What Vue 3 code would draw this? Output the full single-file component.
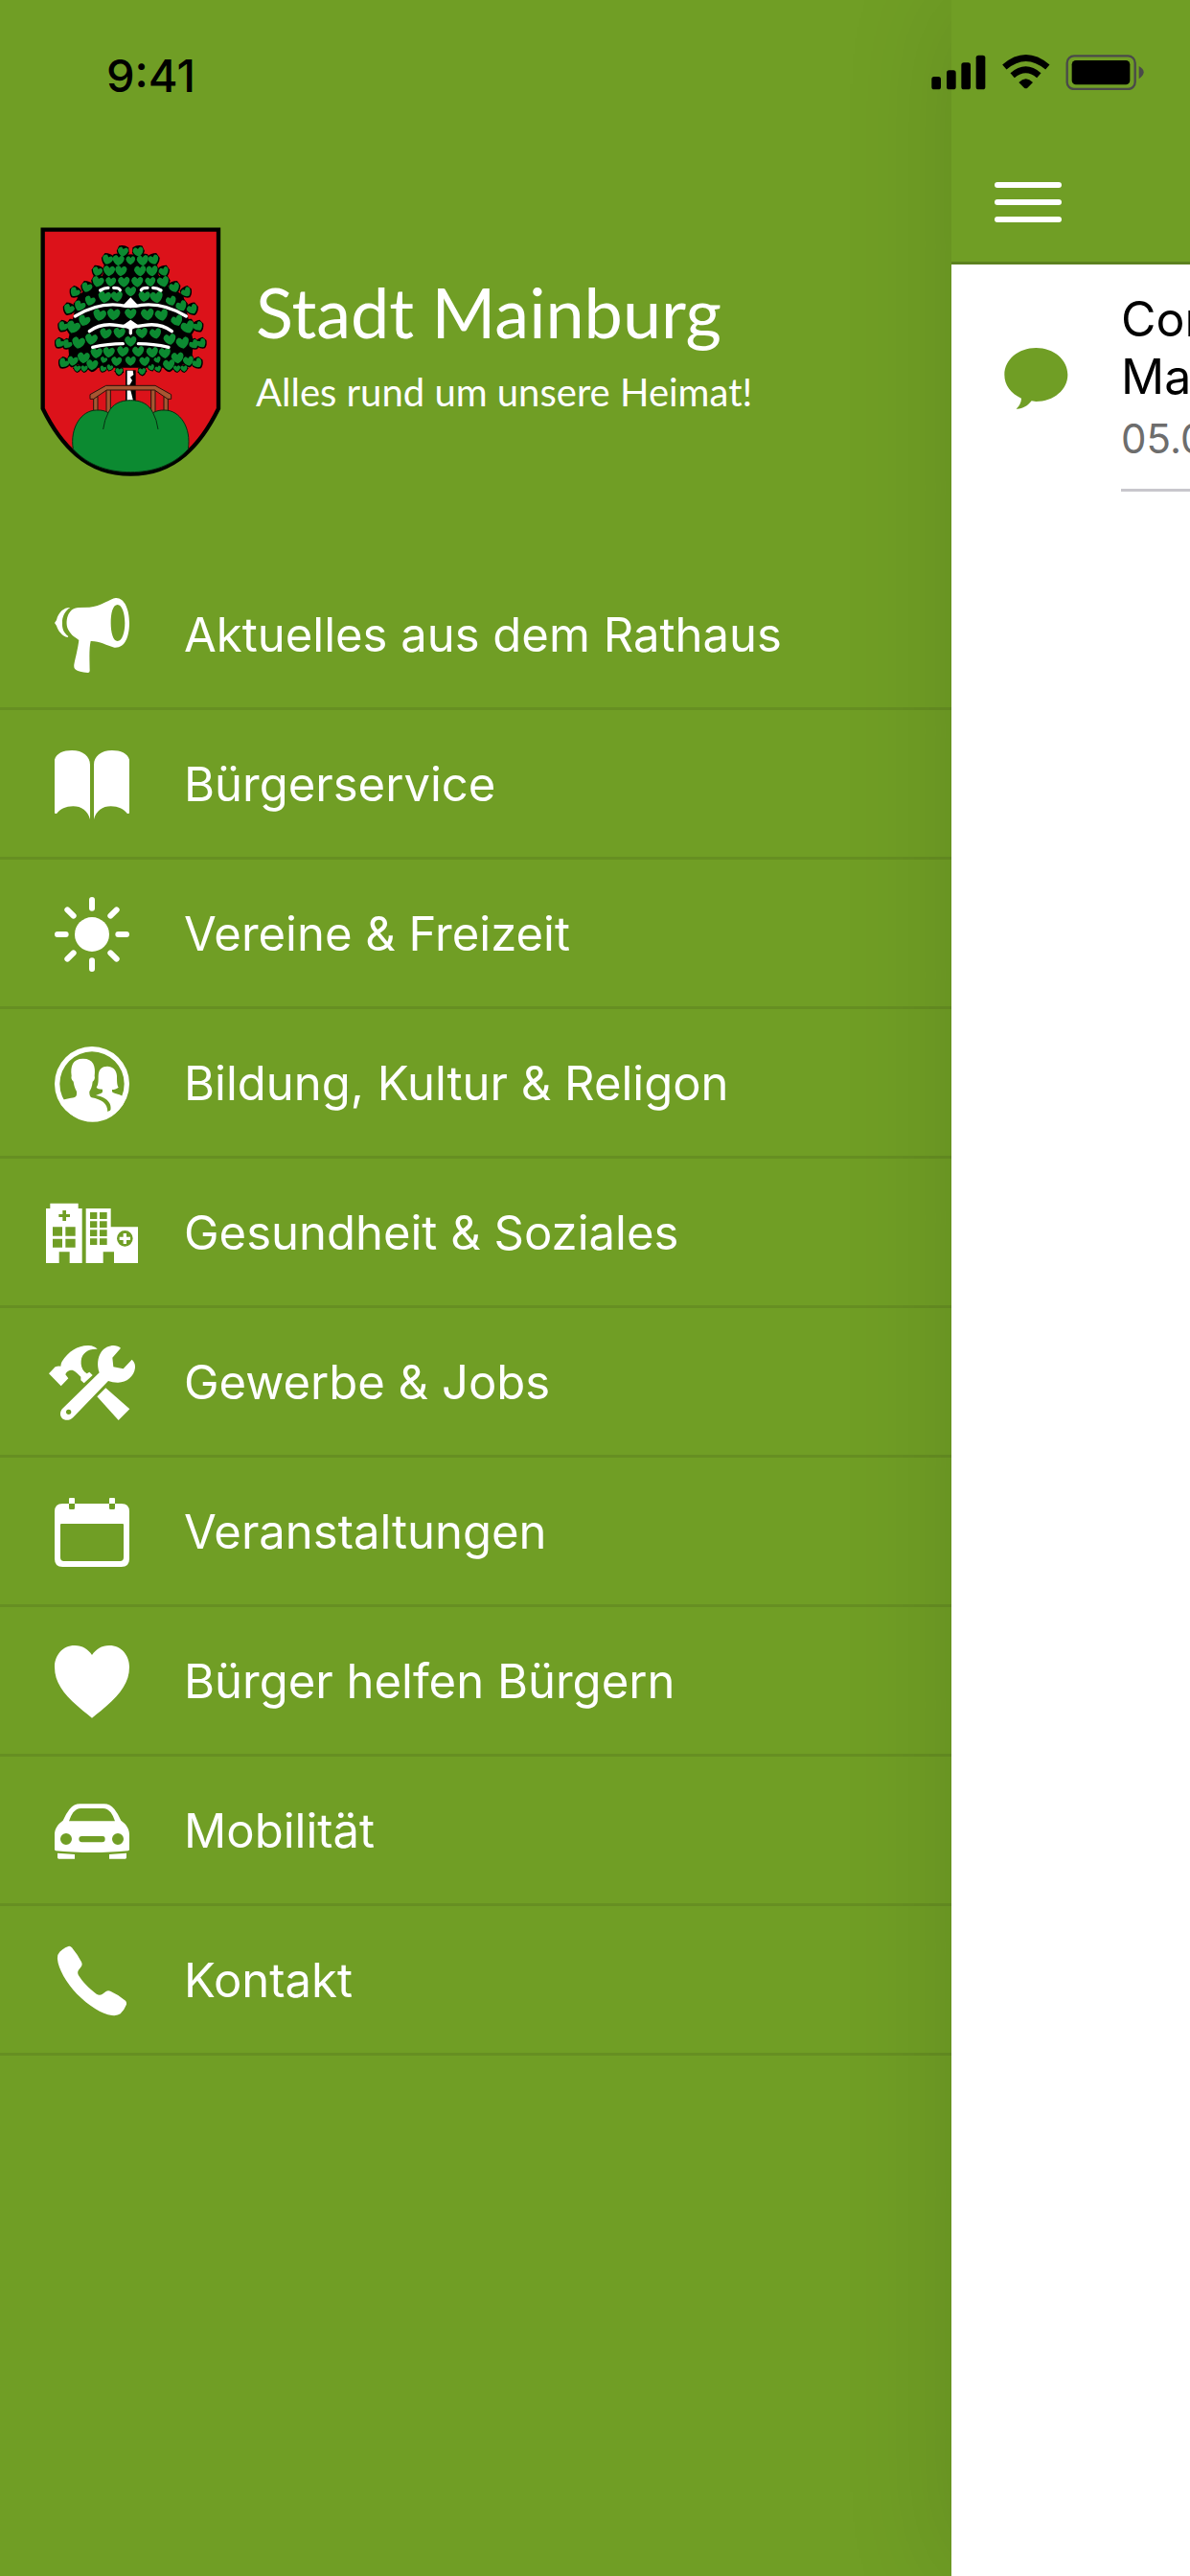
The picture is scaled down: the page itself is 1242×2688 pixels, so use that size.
<template>
  <div class="app">
    <div class="status-bar">
      <span class="clock">9:41</span>
      <svg class="status-icons" viewBox="97 80 666 111" aria-hidden="true">
        <rect x="98" y="149" width="29" height="40" rx="8" />
        <rect x="145" y="129" width="29" height="60" rx="8" />
        <rect x="191" y="105" width="29" height="84" rx="8" />
        <rect x="237" y="82" width="29" height="107" rx="8" />
        <g fill="none" stroke="#000" stroke-width="20">
          <path d="M326 119Q393 62 461 119" />
          <path d="M351 145Q393 109 434 145" />
        </g>
        <path d="M371 167Q393 145 415 167L398 184Q393 188 388 184Z" />
        <rect x="522" y="84" width="213" height="104" rx="22" fill="none" stroke="#4a4a4a" stroke-width="7" />
        <rect x="537" y="98" width="182" height="76" rx="13" />
        <path d="M747 116Q762 124 762 135T747 156Z" fill="#4a4a4a" />
      </svg>
    </div>

    <aside class="drawer">
      <header class="brand">
        <svg class="crest" viewBox="36 52 567 783" role="img" aria-label="Wappen Mainburg">
          <path d="M44 60H594V620C540 730 460 825 319 825S98 730 44 620Z" fill="#dc121a" stroke="#000" stroke-width="13" />
          <!-- tree -->
          <path d="M300 120L338 120L400 160L430 220L500 260L515 330L535 420L530 480L480 510H158L108 480L103 420L123 330L138 260L208 220L238 160Z" transform="translate(28.7 28) scale(.91 .91)" />
          <path d="M303 500H335V600H303Z" />
          <g v-for="(l, i) in leaves" :key="'b' + i" :transform="leafPos(l)">
            <path d="M-17 -17Q0 -24 17 -17L22 2Q14 20 0 24Q-14 20 -22 2Z" />
          </g>
          <g v-for="(l, i) in leaves" :key="'g' + i" :transform="leafPos(l)" fill="#0c8a31">
            <path d="M-9 -15Q-3 -14 0 -8Q4 -14 10 -15Q19 -12 18 -3Q15 11 0 18Q-15 12 -19 -3Q-18 -12 -9 -15Z" />
          </g>
          <g fill="none" stroke="#fff" stroke-width="10" stroke-linecap="round">
            <path d="M224 250Q236 242 249 242M266 242Q283 242 286 249" />
            <path d="M414 250Q402 242 389 242M372 242Q355 242 352 249" />
            <path d="M145 331Q215 288 285 296Q319 304 353 296Q423 288 493 331" />
            <path d="M190 378Q225 351 275 359Q319 368 363 359Q413 351 448 378" />
            <path d="M200 428Q248 417 295 417M438 428Q390 417 343 417" />
          </g>
          <path d="M319 272L344 298L319 305L294 298ZM319 342L345 360L324 372V386L319 390L314 386V372L293 360Z" fill="#fff" />
          <path d="M308 501H326L328 514L318 522L324 532L316 546H308ZM308 560H318L322 575L327 596H308Z" fill="#fff" />
          <!-- bridge -->
          <g fill="#a75632" stroke="#2b130a" stroke-width="3">
            <path d="M203 582H216V628H203ZM243 560H256V650H243ZM383 560H396V650H383ZM423 582H436V628H423Z" />
            <path d="M192 576L242 548H396L446 576V590H435L394 562H244L203 590H192Z" />
          </g>
          <path class="hill" d="M139 747C128 680 165 625 212 625C230 624 240 628 249 633C262 606 286 594 319 594S376 606 389 633C398 628 410 624 426 625C473 625 510 680 499 747C450 800 385 819 319 819S188 800 139 747Z" />
          <path d="M249 633Q237 655 233 685M389 633Q401 655 405 685" fill="none" stroke="#072f12" stroke-width="3" />
        </svg>
        <div class="brand-text">
          <h1>Stadt Mainburg</h1>
          <p>Alles rund um unsere Heimat!</p>
        </div>
      </header>

      <nav class="menu">
        <a v-for="item in items" :key="item.label" class="menu-item" href="#">
          <svg :viewBox="item.box" aria-hidden="true">
            <path v-for="(d, i) in item.paths" :key="i" :d="d" fill-rule="evenodd" />
            <path v-if="item.lines" class="lines" :d="item.lines" />
          </svg>
          <span>{{ item.label }}</span>
        </a>
      </nav>
    </aside>

    <main class="page">
      <div class="toolbar">
        <button class="burger" type="button" aria-label="Menü">
          <span></span><span></span><span></span>
        </button>
      </div>
      <article class="news">
        <svg class="bubble" viewBox="325 993 201 192" aria-hidden="true">
          <path d="M425 993C480 993 524 1030 524 1077S480 1161 425 1161L411 1159C398 1175 382 1185 363 1184Q378 1170 379 1151C346 1136 326 1110 326 1077C326 1030 370 993 425 993Z" />
        </svg>
        <div class="news-text">
          <h2>Cor<br>Ma</h2>
          <time>05.0</time>
        </div>
      </article>
    </main>
  </div>
</template>

<script setup>
// left half of the tree crown: x, y, rotation, scale
const half = [
  [295, 128, 10, 0.9], [247, 153, 20, 0.9], [281, 155, 5, 1],
  [215, 190, 20, 0.85], [252, 188, 5, 1], [289, 188, 5, 1],
  [217, 222, 15, 1], [257, 222, 5, 0.9], [298, 222, 0, 1],
  [145, 255, 35, 0.85], [182, 240, 20, 0.9], [238, 270, 8, 1.1], [276, 268, -5, 1],
  [192, 282, 20, 0.9], [160, 298, 25, 0.95], [126, 308, 25, 0.9],
  [222, 326, 12, 1.1], [266, 324, 5, 1.1],
  [174, 344, 20, 1], [140, 364, 20, 1.15], [108, 362, 30, 0.85],
  [241, 384, 10, 1], [284, 382, 5, 1],
  [196, 402, 10, 1.05], [156, 413, 10, 1.1], [121, 418, 35, 0.8], [97, 415, 35, 0.8],
  [212, 445, 5, 1], [251, 443, 5, 1], [295, 440, 5, 1],
  [172, 460, 5, 1.05], [138, 470, 10, 0.9], [110, 477, 35, 0.85],
  [235, 467, 20, 0.6], [275, 471, 5, 0.9],
  [199, 482, 5, 1], [174, 494, 5, 0.6], [152, 494, 5, 0.6],
  [254, 491, 20, 0.55], [233, 495, 20, 0.55], [283, 503, 5, 0.65],
]
const middle = [
  [319, 155, 0, 0.8], [319, 252, 0, 0.95], [319, 322, 0, 1],
  [319, 408, 0, 1], [319, 470, 0, 0.9],
]
const leaves = [...half, ...half.map(([x, y, r, s]) => [638 - x, y, -r, s]), ...middle]

function leafPos([x, y, r, s]) {
  return `translate(${x} ${y}) rotate(${r}) scale(${s})`
}

const items = [
  {
    label: 'Aktuelles aus dem Rathaus',
    box: '54 45 288 288',
    paths: [
      'M157 102C120 102 112 150 124 172C133 190 148 197 157 204C153 235 147 255 142 280C140 296 146 302 185 306Q191 306 191 300C191 270 188 235 194 207C220 206 245 221 268 227C300 230 315 195 315 150C315 105 298 70 272 72C255 74 225 99 190 101ZM278 93C263 93 257 120 257 150S264 207 278 207S301 180 301 150S292 93 278 93Z',
      'M130 102C112 101 93 115 87 141L81 150L87 159C92 175 105 192 122 195L124 192C108 180 104 165 105 150C104 130 114 112 130 102Z',
    ],
  },
  {
    label: 'Bürgerservice',
    box: '54 513 288 288',
    paths: [
      'M81 578C87 558 108 549 135 549C170 549 192 568 192 594V765C185 738 165 724 139 724C115 724 100 733 88 746Q81 748 81 744Z',
      'M315 578C309 558 288 549 261 549C226 549 204 568 204 594V765C211 738 231 724 257 724C281 724 296 733 308 746Q315 748 315 744Z',
    ],
  },
  {
    label: 'Vereine & Freizeit',
    box: '54 81 288 288',
    paths: ['M144 225A54 54 0 0 1 252 225A54 54 0 0 1 144 225Z'],
    lines: 'M198 117V143M198 307V333M90 225H116M280 225H306M121 148L140 167M275 148L256 167M121 302L140 283M275 302L256 283',
  },
  {
    label: 'Bildung, Kultur & Religon',
    box: '54 549 288 288',
    paths: [
      'M81 693A117 117 0 0 1 315 693A117 117 0 0 1 81 693ZM97 693A101 101 0 0 0 299 693A101 101 0 0 0 97 693Z',
      'M100 748C112 738 140 739 147 733Q151 730 150 717C143 705 141 692 140 686C134 680 132 674 134 668C130 638 137 614 170 614S210 638 206 668C208 674 206 682 200 686C199 700 194 711 190 717Q189 732 197 736C228 742 247 754 247 780L256 777C259 762 254 751 243 742C232 733 220 731 210 729C220 724 231 724 231 717V710C221 710 214 707 212 704C218 695 218 685 218 668C219 646 230 638 246 638S275 648 276 668C276 690 277 698 281 704C275 709 268 711 261 711V717C263 723 282 724 294 732L300 748A110 110 0 0 1 100 748Z',
    ],
  },
  {
    label: 'Gesundheit & Soziales',
    box: '54 57 288 288',
    paths: [
      'M54 123H67V107H155V123H167V294H128V259H95V294H54ZM106 129V141H94V150H106V162H117V150H129V141H117V129ZM75 181V209H105V181ZM115 181V209H146V181ZM75 218V245H105V218ZM115 218V245H146V218Z',
      'M179 123H257V181H342V294H267V259H233V294H179ZM192 135V156H214V135ZM222 135V156H245V135ZM192 163V183H214V163ZM222 163V183H245V163ZM192 190V210H214V190ZM222 190V210H245V190ZM192 217V237H214V217ZM222 217V237H245V217ZM276 217A25 25 0 0 0 326 217A25 25 0 0 0 276 217Z',
      'M296 201H306V212H318V222H306V234H296V222H284V212H296Z',
    ],
  },
  {
    label: 'Gewerbe & Jobs',
    box: '54 525 288 288',
    paths: [
      'M63 640L83 619Q90 616 100 617Q101 606 104 602C124 570 155 551 187 552Q207 553 215 564C190 561 166 575 164 600Q162 620 174 634L182 640L190 635L200 645L173 670L163 661V650C155 642 147 632 137 629C127 628 117 634 115 643L124 655L101 679Z',
      'M288 560L262 590L265 619L296 625L323 596Q334 606 333 622C330 650 305 669 278 668Q262 668 249 663L139 777C128 788 112 788 104 779C96 770 98 757 106 749L221 637C213 615 215 590 228 571C244 551 272 546 288 560ZM117 760A8 8 0 0 0 133 760A8 8 0 0 0 117 760Z',
      'M241 685L316 751L281 786L214 712Z',
    ],
  },
  {
    label: 'Veranstaltungen',
    box: '54 63 288 288',
    paths: [
      'M126 117V102Q126 99 129 99H141Q144 99 144 102V117H252V102Q252 99 255 99H267Q270 99 270 102V117H290Q315 117 315 142V290Q315 315 290 315H106Q81 315 81 290V142Q81 117 106 117ZM126 117V131Q126 135 130 135H140Q144 135 144 131V117ZM252 117V131Q252 135 256 135H266Q270 135 270 131V117ZM99 183V286Q99 297 110 297H286Q297 297 297 286V183Q297 180 294 180H102Q99 180 99 183Z',
    ],
  },
  {
    label: 'Bürger helfen Bürgern',
    box: '54 531 288 288',
    paths: ['M198 591C186 573 168 561 144 561C105 561 81 593 81 628C81 692 128 732 198 788C268 732 315 692 315 628C315 593 291 561 252 561C228 561 210 573 198 591Z'],
  },
  {
    label: 'Mobilität',
    box: '54 39 288 288',
    paths: [
      'M160 97H236Q254 97 268 113Q280 128 289 149C307 162 315 176 315 194V239Q315 243 311 244C240 251 156 251 85 244Q81 243 81 239V194C81 176 89 162 107 149Q116 128 128 113Q142 97 160 97ZM163 111Q150 111 139 124Q131 135 126 151H270Q265 135 257 124Q246 111 233 111ZM99 207A18 18 0 0 0 135 207A18 18 0 0 0 99 207ZM261 207A18 18 0 0 0 297 207A18 18 0 0 0 261 207ZM166 198Q157 198 157 207T166 217H230Q239 217 239 207T230 198Z',
      'M90 251L144 255V269H94Q90 269 90 265ZM306 251L252 255V269H302Q306 269 306 265Z',
    ],
  },
  {
    label: 'Kontakt',
    box: '54 507 288 288',
    paths: ['M124 543Q130 541 135 547Q154 570 165 592Q169 600 164 607L156 617Q151 624 156 634C169 655 190 676 212 692Q222 698 231 692L242 684Q249 680 257 684Q282 695 303 713Q308 719 305 727Q300 741 287 754Q278 761 260 759C230 756 187 728 151 692C118 659 92 612 90 583Q89 568 97 560Q108 549 124 543Z'],
  },
]
</script>

<style>
body { background: #709e25; }
</style>

<style scoped>
.app { position: relative; display: grid; grid-template-columns: minmax(0, 1fr) 249px; min-height: 100vh; overflow: hidden; background: #709e25; font-family: Inter, "Liberation Sans", sans-serif; }
.status-bar { position: absolute; z-index: 2; top: 0; left: 0; right: 0; display: flex; justify-content: space-between; align-items: center; height: 150px; padding: 0 48px 0 111px; box-sizing: border-box; }
.clock { padding-top: 8px; font-size: 47px; font-weight: 500; line-height: 56px; }
.status-icons { width: 222px; height: 37px; }

.drawer { color: #fff; }
.brand { display: flex; align-items: center; gap: 36px; height: 585px; padding: 150px 42px 0; box-sizing: border-box; }
.crest { flex: none; width: 189px; height: 261px; }
.hill { fill: #0c8a31; stroke: #072f12; stroke-width: 3; }
.brand-text { padding-bottom: 20px; font-family: Lato, "Noto Sans", sans-serif; white-space: nowrap; }
h1, h2, p { margin: 0; font-weight: 400; }
h1 { margin-bottom: 18px; font-size: 72px; line-height: 84px; }
.brand-text p { font-size: 40px; line-height: 48px; }

.menu-item { display: flex; align-items: center; gap: 48px; height: 156px; padding: 0 48px; box-sizing: border-box; color: #fff; font-size: 49px; line-height: 60px; text-decoration: none; white-space: nowrap; box-shadow: inset 0 -3px #668f22; }
.menu-item svg { flex: none; width: 96px; height: 96px; fill: #fff; }
.lines { fill: none; stroke: #fff; stroke-width: 18px; stroke-linecap: round; }

.page { position: relative; z-index: 1; background: #fff; box-shadow: 0 0 120px rgba(0, 0, 0, 0.12); }
.toolbar { display: flex; align-items: flex-end; height: 276px; padding: 0 45px 41px; box-sizing: border-box; background: #709e25; border-bottom: 3px solid #5c811f; }
.burger { display: flex; flex-direction: column; gap: 12px; width: 70px; padding: 0; background: none; border: none; cursor: pointer; }
.burger span { height: 6px; border-radius: 3px; background: #fff; }
.news { display: flex; gap: 55px; padding-left: 55px; }
.bubble { flex: none; align-self: center; width: 67px; height: 64px; fill: #709e25; }
.news-text { flex: 1; min-width: 0; height: 237px; padding-top: 27px; box-sizing: border-box; border-bottom: 3px solid #c8c7cc; overflow: hidden; white-space: nowrap; }
h2 { color: #000; font-size: 50px; line-height: 60px; }
.news-text time { display: block; color: #6d6d6d; font-size: 42px; line-height: 70px; }
</style>
